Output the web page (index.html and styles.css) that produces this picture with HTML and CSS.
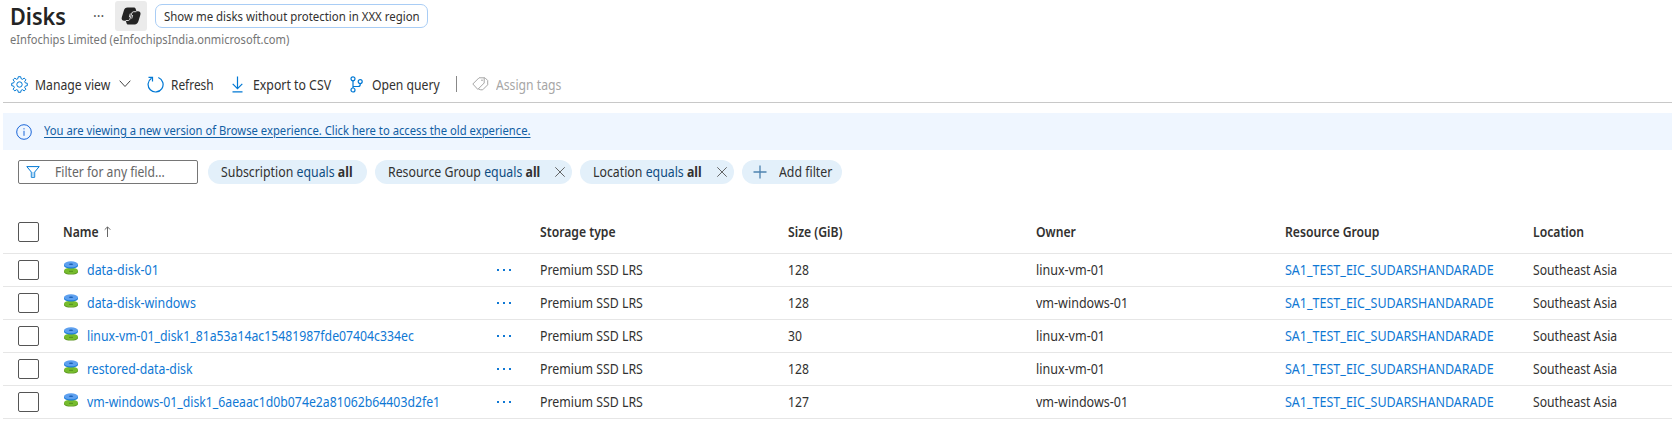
FILE: index.html
```html
<!DOCTYPE html>
<html lang="en">
<head>
<meta charset="utf-8">
<title>Disks</title>
<link rel="stylesheet" href="styles.css">
</head>
<body>
<svg width="0" height="0" class="defs">
  <symbol id="disk" viewBox="0 0 14 14">
    <path d="M0 9.700v1.300C0 12.700 3 13.600 7 13.600s7-.9 7-2.600V9.700z" fill="#5e9624"/>
    <ellipse cx="7" cy="9.800" rx="7" ry="3.100" fill="#76bc2d"/>
    <path d="M5 10.300h4" stroke="#4f8a1c" stroke-width=".9"/>
    <path d="M0 3.300v1.300c0 1.900 3 3 7 3s7-1.100 7-3V3.300z" fill="#1d7fd8"/>
    <ellipse cx="7" cy="3.300" rx="7" ry="3" fill="#5ea0ef"/>
    <ellipse cx="7" cy="3.300" rx="2.200" ry=".8" fill="#1a5fb4"/>
  </symbol>
  <symbol id="close" viewBox="0 0 10 10"><path d="M.3.300l9.400 9.400M9.700.300l-9.400 9.400" stroke="#555" stroke-width=".9"/></symbol>
</svg>
<header class="head">
  <h1 class="title"><span class="t t-title">Disks</span></h1>
  <span class="more">···</span>
  <span class="copilot"><svg width="20" height="18" viewBox="0 0 20 18">
    <path d="M6.500.500h6.300c1 0 1.600.5 1.900 1.500l.7 2.300h1.600c2 0 3 1.500 2.400 3.500l-2 6.500c-.6 2-1.800 3.200-3.700 3.200H7.400c-1 0-1.600-.5-1.900-1.500l-.7-2.300H3.200c-2 0-3-1.500-2.400-3.500l2-6.500C3.400 1.700 4.600.500 6.500.500z" fill="#242424"/>
    <path d="M15.400 4.700h-2.700c-1 0-1.500.4-1.800 1.300L8.900 12c-.3 1-.9 1.500-1.800 1.500H4.800M8.300 10.200l1-3.700M11.700 8l-1 3.600" fill="none" stroke="#ebebeb" stroke-width=".9"/></svg></span>
  <span class="prompt"><span class="t t-prompt">Show me disks without protection in XXX region</span></span>
</header>
<div class="sub"><span class="t t-sub">eInfochips Limited (eInfochipsIndia.onmicrosoft.com)</span></div>
<nav class="toolbar">
  <svg class="i-gear" width="17" height="17" viewBox="0 0 17 17" fill="none" stroke="#0078d4"><circle cx="8.500" cy="8.500" r="2.700"/><path stroke-linejoin="round" d="M7.300.700h2.400l.4 2 1.400.6 1.700-1.200 1.700 1.700-1.200 1.700.6 1.400 2 .4v2.400l-2 .4-.6 1.400 1.200 1.700-1.700 1.700-1.700-1.200-1.400.6-.4 2H7.300l-.4-2-1.400-.6-1.700 1.200-1.700-1.700 1.200-1.700-.6-1.400-2-.4V7.300l2-.4.6-1.400-1.200-1.700 1.700-1.700 1.700 1.200 1.400-.6z"/></svg>
  <span class="t t-manage">Manage view</span>
  <svg class="i-chev" width="13" height="8" viewBox="0 0 13 8" fill="none" stroke="#444"><path d="M.7.700l5.300 5.800L11.300.700"/></svg>
  <svg class="i-refresh" width="17" height="17" viewBox="0 0 17 17" fill="none" stroke="#0078d4" stroke-width="1.200"><path d="M11.300 1.500A7.500 7.500 0 1 1 4.500 2.200M1.500 1.400h4v4"/></svg>
  <span class="t t-refresh">Refresh</span>
  <svg class="i-down" width="11" height="17" viewBox="0 0 11 17" fill="none" stroke="#0078d4" stroke-width="1.200"><path d="M5.500.500v12M.7 7.800l4.800 4.800 4.800-4.800M.5 15.900h10"/></svg>
  <span class="t t-export">Export to CSV</span>
  <svg class="i-branch" width="13" height="17" viewBox="0 0 13 17" fill="none" stroke="#0078d4" stroke-width="1.200"><circle cx="3" cy="2.800" r="2"/><circle cx="3" cy="14" r="2"/><circle cx="10.200" cy="5.600" r="2"/><path d="M3 4.800V12M3 10.500h5.200c1.300 0 2-.7 2-2v-.9"/></svg>
  <span class="t t-open">Open query</span>
  <span class="rule"></span>
  <svg class="i-tag" width="17" height="14" viewBox="0 0 17 14" fill="none" stroke="#a6a6a6"><path d="M.8 7L7 .8h5.200V6L5.800 12.400zM12.200.800h.8l2.700 2.700v4.300l-5 5h-2L6.500 12"/><circle cx="10" cy="3.200" r=".4"/></svg>
  <span class="t t-assign">Assign tags</span>
</nav>
<div class="notice">
  <svg width="16" height="16" viewBox="0 0 16 16" fill="none" stroke="#1a66d9"><circle cx="8" cy="8" r="7.300"/><path d="M8 6.800v5M8 4.200v1.200"/></svg>
  <a class="t t-notice">You are viewing a new version of Browse experience. Click here to access the old experience.</a>
</div>
<div class="filters">
  <div class="search">
    <svg width="14" height="12" viewBox="0 0 14 12" fill="none" stroke="#0078d4"><path d="M.8.600h12.400L8.700 6v5.300H5.300V6z"/><path d="M5.800 6h2.400v5H5.800z" fill="#b5d9f5" stroke="none"/></svg>
    <span class="t t-filter">Filter for any field...</span>
  </div>
  <div class="pill p1"><span class="t">Subscription <i>equals</i> <b>all</b></span></div>
  <div class="pill p2"><span class="t">Resource Group <i>equals</i> <b>all</b></span><svg width="10" height="10"><use href="#close"/></svg></div>
  <div class="pill p3"><span class="t">Location <i>equals</i> <b>all</b></span><svg width="10" height="10"><use href="#close"/></svg></div>
  <div class="pill p4"><svg width="14" height="14" viewBox="0 0 14 14" stroke="#4d82b0" stroke-width="1.300"><path d="M7 .500v13M.500 7h13"/></svg><span class="t">Add filter</span></div>
</div>
<main class="grid">
  <div class="row header"><span class="box"></span><span class="name"><span class="t t-name">Name</span><svg class="sort" width="7" height="11" viewBox="0 0 7 11" fill="none" stroke="#666"><path d="M3.500 11V1M.700 3.700L3.500.900l2.800 2.800"/></svg></span><span></span><span class="t t-st">Storage type</span><span class="t c-st">Size (GiB)</span><span class="t t-own">Owner</span><span class="t t-rg">Resource Group</span><span class="t t-loc">Location</span></div>
  <div class="row"><span class="box"></span><span class="name"><svg class="disk" width="14" height="14"><use href="#disk"/></svg><a class="t n1">data-disk-01</a></span><span class="dots"></span><span class="t c-st">Premium SSD LRS</span><span class="t c-num">128</span><span class="t c-own">linux-vm-01</span><a class="t c-rg">SA1_TEST_EIC_SUDARSHANDARADE</a><span class="t c-loc">Southeast Asia</span></div>
  <div class="row"><span class="box"></span><span class="name"><svg class="disk" width="14" height="14"><use href="#disk"/></svg><a class="t n2">data-disk-windows</a></span><span class="dots"></span><span class="t c-st">Premium SSD LRS</span><span class="t c-num">128</span><span class="t c-own">vm-windows-01</span><a class="t c-rg">SA1_TEST_EIC_SUDARSHANDARADE</a><span class="t c-loc">Southeast Asia</span></div>
  <div class="row"><span class="box"></span><span class="name"><svg class="disk" width="14" height="14"><use href="#disk"/></svg><a class="t n3">linux-vm-01_disk1_81a53a14ac15481987fde07404c334ec</a></span><span class="dots"></span><span class="t c-st">Premium SSD LRS</span><span class="t c-num">30</span><span class="t c-own">linux-vm-01</span><a class="t c-rg">SA1_TEST_EIC_SUDARSHANDARADE</a><span class="t c-loc">Southeast Asia</span></div>
  <div class="row"><span class="box"></span><span class="name"><svg class="disk" width="14" height="14"><use href="#disk"/></svg><a class="t n4">restored-data-disk</a></span><span class="dots"></span><span class="t c-st">Premium SSD LRS</span><span class="t c-num">128</span><span class="t c-own">linux-vm-01</span><a class="t c-rg">SA1_TEST_EIC_SUDARSHANDARADE</a><span class="t c-loc">Southeast Asia</span></div>
  <div class="row"><span class="box"></span><span class="name"><svg class="disk" width="14" height="14"><use href="#disk"/></svg><a class="t n5">vm-windows-01_disk1_6aeaac1d0b074e2a81062b64403d2fe1</a></span><span class="dots"></span><span class="t c-st">Premium SSD LRS</span><span class="t c-num">127</span><span class="t c-own">vm-windows-01</span><a class="t c-rg">SA1_TEST_EIC_SUDARSHANDARADE</a><span class="t c-loc">Southeast Asia</span></div>
</main>
</body>
</html>
```
FILE: styles.css
```css
* { box-sizing: border-box; }
body { margin: 0; height: 444px; overflow: hidden; background: #fff; color: #323130; font: 14px/20px "Noto Sans", sans-serif; white-space: nowrap; }
svg { display: block; flex: none; }
.defs { position: absolute; }
i { font-style: normal; color: #0f4c81; }
b { font-weight: 700; }
/* Condensed text: each class sets its own width factor */
.t { --w: .88; display: inline-block; flex: none; justify-self: start; transform: scaleX(var(--w)); transform-origin: 0 50%; }
.head { display: flex; height: 32px; padding-left: 10px; }
.title { margin: 0; width: 83px; font-size: 23px; line-height: 32px; font-weight: 600; color: #242424; }
.t-title { --w: .94; }
.more { width: 22px; line-height: 31px; color: #555; font-size: 14px; }
.copilot { width: 32px; height: 30px; margin-top: 1px; background: #ebebeb; border-radius: 3px; display: flex; align-items: center; justify-content: center; }
.prompt { width: 273px; height: 24px; margin: 4px 0 0 8px; padding-left: 8px; border: 1px solid #a9cdf5; border-radius: 7px; font-size: 12px; line-height: 23px; }
.t-prompt { --w: .952; }
.sub { height: 34px; padding-left: 10px; font-size: 12px; line-height: 16px; color: #757575; }
.t-sub { --w: .927; }
.toolbar { display: flex; align-items: center; height: 37px; margin-left: 3px; padding-left: 8px; border-bottom: 1px solid #c8c8c8; }
.toolbar > .t { --w: .87; padding-top: 2px; }
.t-manage { margin-left: 7px; width: 84px; }
.i-refresh { margin-left: 15px; }
.toolbar > .t-refresh { --w: .85; margin-left: 7px; width: 61px; }
.toolbar > .t-export { --w: .878; margin-left: 10px; width: 97px; }
.t-open { margin-left: 9px; width: 84px; }
.rule { width: 1px; height: 16px; background: #888; margin-right: 15px; }
.t-assign { margin-left: 7px; color: #a6a6a6; }
.notice { display: flex; align-items: center; gap: 12px; height: 37px; margin: 10px 0 0 3px; padding-left: 13px; background: #eff6ff; font-size: 12px; }
.t-notice { --w: .937; margin-top: -2px; text-decoration: underline; text-underline-offset: 2px; }
.filters { display: flex; padding: 10px 0 0 18px; }
.search { display: flex; align-items: center; width: 180px; height: 24px; margin-right: 10px; padding-left: 7px; gap: 15px; border: 1px solid #767676; border-radius: 2px; color: #666; }
.t-filter { --w: .866; }
.pill { display: flex; align-items: center; height: 24px; margin-right: 8px; padding-left: 13px; border-radius: 12px; background: #e3f0fa; }
.p1 { width: 159px; }
.p2 { width: 197px; }
.p3 { width: 154px; }
.p2 .t { width: 167px; }
.p3 .t { width: 124px; }
.p4 { width: 100px; padding-left: 11px; gap: 12px; }
.grid { margin: 27px 0 0 3px; }
.row { display: grid; grid-template-columns: 45px 432px 44.500px 248.500px 248px 248.500px 248.500px 1fr; padding-left: 15px; height: 33px; align-items: center; border-bottom: 1px solid #e6e6e6; }
.header { height: 43px; font-weight: 600; }
.header .t { --w: .87; }
.box { width: 21px; height: 20px; border: 1px solid #555; border-radius: 2px; background: #fff; }
.name { display: flex; }
.disk { margin: 1px 9px 0 1px; }
.t-name { width: 35px; }
.sort { margin: 4px 0 0 6px; }
a { color: #0f78d4; }
.n1, .n2 { --w: .888; }
.n3, .n4, .n5 { --w: .876; }
.c-own, .c-rg { --w: .894; }
.c-loc, .c-num { --w: .87; }
a.t-notice { color: #115ea3; }
.dots { width: 17px; height: 2px; background: radial-gradient(circle, #0f78d4 1px, transparent 1.200px) 0 0 / 6px 2px; }
```
